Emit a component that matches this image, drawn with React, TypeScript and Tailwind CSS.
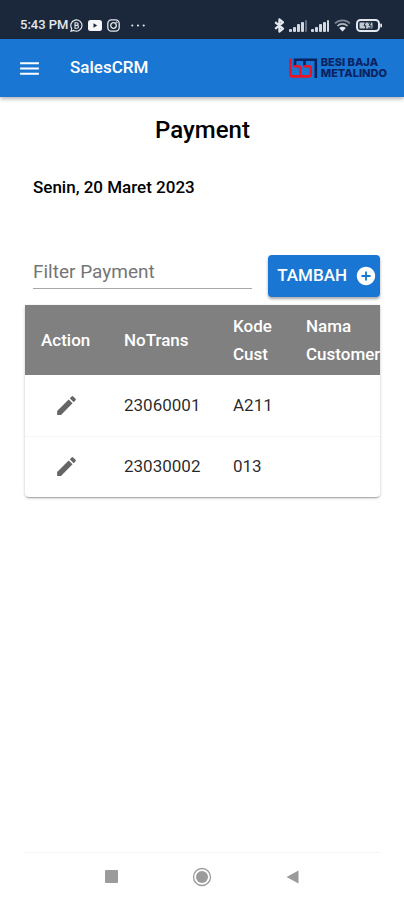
import { useMemo, useState } from 'react';
import { MdAddCircle, MdEdit, MdMenu } from 'react-icons/md';

interface Payment {
  noTrans: string;
  kodeCust: string;
  namaCustomer: string;
}

const PAYMENTS: Payment[] = [
  { noTrans: '23060001', kodeCust: 'A211', namaCustomer: '' },
  { noTrans: '23030002', kodeCust: '013', namaCustomer: '' },
];

function SignalIcon({ weak = false }: { weak?: boolean }) {
  return (
    <svg width="19" height="13" viewBox="0 0 19 13" fill="#d3d8df">
      <rect x="0" y="10" width="3" height="3" rx="1" />
      <rect x="4" y="8" width="3" height="5" rx="1" />
      <rect x="8" y="5" width="3" height="8" rx="1" />
      <rect x="12" y="3" width="3" height="10" rx="1" />
      <rect x="16" y="1" width="2" height="12" rx="1" opacity={weak ? 0.4 : 1} />
    </svg>
  );
}

function StatusBar() {
  return (
    <div className="flex h-[39px] items-end justify-between bg-[#1b283b] pr-[22px] pb-1.5 pl-5 text-[#e4e8ee]">
      <div className="flex h-4 items-center">
        <span className="w-12 text-[13px] leading-4 font-medium whitespace-nowrap">5:43 PM</span>
        <svg className="ml-0.5" width="13" height="13" viewBox="0 0 13 13" fill="none" stroke="currentColor">
          <path d="M1 12.2 1.7 9.6A5.6 5.6 0 1 1 3.8 11.5Z" strokeWidth="1.2" />
          <path d="M5 3.8v5.4h2.1a1.4 1.4 0 0 0 0-2.8H5h1.8a1.3 1.3 0 0 0 0-2.6Z" strokeWidth="1.1" />
        </svg>
        <svg className="ml-[5px]" width="14" height="11" viewBox="0 0 14 11">
          <rect width="14" height="11" rx="2.5" fill="#f4f6f8" />
          <path d="M5.5 3.3v4.4L9.2 5.5Z" fill="#1b283b" />
        </svg>
        <svg className="ml-[5px]" width="13" height="13" viewBox="0 0 13 13" fill="none" stroke="currentColor">
          <rect x="0.8" y="0.8" width="11.4" height="11.4" rx="3.6" strokeWidth="1.3" />
          <circle cx="6.5" cy="6.5" r="2.8" strokeWidth="1.3" />
          <circle cx="9.8" cy="3.2" r="0.5" />
        </svg>
        <svg className="ml-[11px]" width="14" height="3" viewBox="0 0 14 3" fill="currentColor">
          <circle cx="1.3" cy="1.5" r="1.1" />
          <circle cx="7" cy="1.5" r="1.1" />
          <circle cx="12.7" cy="1.5" r="1.1" />
        </svg>
      </div>
      <div className="flex h-4 items-center">
        <svg className="mr-1" width="11" height="15" viewBox="0 0 11 15" fill="none" stroke="currentColor">
          <path d="M1.2 4.2 9 10.6 5.4 13.6V1.4L9 4.4 1.2 10.8" strokeWidth="2.2" strokeLinejoin="round" />
        </svg>
        <SignalIcon weak />
        <span className="w-[3px]" />
        <SignalIcon />
        <svg className="ml-1" width="17" height="13" viewBox="0 0 17 13" fill="none" stroke="currentColor">
          <path d="M1 4.4a10.6 10.6 0 0 1 15 0" strokeWidth="1.7" opacity="0.5" />
          <path d="M3.4 7a7.2 7.2 0 0 1 10.2 0" strokeWidth="1.7" opacity="0.75" />
          <path d="M8.5 12.6 5.2 9.1a4.7 4.7 0 0 1 6.6 0Z" fill="currentColor" stroke="none" />
        </svg>
        <svg className="ml-[5px]" width="26" height="13" viewBox="0 0 26 13">
          <rect x="1" y="1" width="22" height="11" rx="3.5" fill="none" stroke="#e4e8ee" strokeWidth="2" />
          <rect x="3.5" y="3.5" width="13" height="6" rx="1" fill="#c3cad3" />
          <path d="M9.5 3.2 8 6.8h2l-.8 3M12 4h3l-2 2.3h2V9h-3" fill="none" stroke="#1b283b" />
          <rect x="24.3" y="4.5" width="1.7" height="4" rx="0.8" fill="#e4e8ee" />
        </svg>
      </div>
    </div>
  );
}

function CompanyLogo() {
  return (
    <div className="flex items-center gap-[3px] text-[#0b2263]">
      <svg width="29" height="20" viewBox="0 0 29 20" fill="none" strokeWidth="2.6">
        <path d="M6 8V1.8H26.8V20M15.5 8V1.8" stroke="#0b2263" />
        <path d="M1.4 0.5V16.5Q1.4 18.4 3.3 18.4H19.5Q21.8 18.4 21.8 16V10.5Q21.8 8.2 19.5 8.2H14.2" stroke="#ea1425" />
        <path d="M4.7 8.2H9Q11.4 8.2 11.4 10.5V18" stroke="#ea1425" />
      </svg>
      <span className="flex flex-col font-[Inter,sans-serif] text-[11px] leading-[11px] font-extrabold">
        <span>BESI BAJA</span>
        <span>METALINDO</span>
      </span>
    </div>
  );
}

function AppHeader() {
  return (
    <header className="z-10 flex h-[58px] items-center bg-[#1976d2] px-[17px] text-white shadow-[0_2px_4px_rgba(0,0,0,0.3)]">
      <button type="button" aria-label="Menu">
        <MdMenu size={25} />
      </button>
      <span className="ml-7 flex-1 text-[17px] font-medium">SalesCRM</span>
      <CompanyLogo />
    </header>
  );
}

function PaymentTable({ rows }: { rows: Payment[] }) {
  return (
    <div className="mt-2 overflow-hidden rounded-b bg-white shadow-[0_2px_1px_-1px_rgba(0,0,0,0.2),0_1px_3px_rgba(0,0,0,0.25)]">
      <table className="w-[420px] min-w-full table-fixed text-left text-[17px]">
        <colgroup>
          <col className="w-[83px]" />
          <col className="w-[109px]" />
          <col className="w-[73px]" />
          <col />
        </colgroup>
        <thead className="bg-[#808080] leading-7 text-white">
          <tr className="h-[70px]">
            <th className="pl-4 font-medium">Action</th>
            <th className="pl-4 font-medium">NoTrans</th>
            <th className="pl-4 font-medium">Kode Cust</th>
            <th className="pl-4 font-medium">
              Nama
              <br />
              Customer
            </th>
          </tr>
        </thead>
        <tbody className="text-black/85">
          {rows.map(row => (
            <tr key={row.noTrans} className="h-[61px] border-b border-gray-100 last:border-b-0">
              <td className="pl-[29px]">
                <button type="button" aria-label={`Edit ${row.noTrans}`} className="block text-[#666666]">
                  <MdEdit size={25} />
                </button>
              </td>
              <td className="pl-4">{row.noTrans}</td>
              <td className="pl-4">{row.kodeCust}</td>
              <td className="pl-4">{row.namaCustomer}</td>
            </tr>
          ))}
        </tbody>
      </table>
    </div>
  );
}

function NavigationBar() {
  return (
    <nav className="mx-6 flex h-12 items-center justify-around border-t border-gray-100 px-11 text-[#9b9b9b]">
      <button type="button" aria-label="Recent apps">
        <svg width="13" height="13" viewBox="0 0 13 13">
          <rect width="13" height="13" rx="1" fill="currentColor" />
        </svg>
      </button>
      <button type="button" aria-label="Home">
        <svg width="20" height="20" viewBox="0 0 20 20">
          <circle cx="10" cy="10" r="8.5" fill="none" stroke="currentColor" strokeWidth="1.3" />
          <circle cx="10" cy="10" r="6" fill="currentColor" />
        </svg>
      </button>
      <button type="button" aria-label="Back">
        <svg width="13" height="14" viewBox="0 0 13 14">
          <path d="M12.5 0.5v13L0.5 7Z" fill="currentColor" />
        </svg>
      </button>
    </nav>
  );
}

export default function App() {
  const [filter, setFilter] = useState('');

  const rows = useMemo(
    () => PAYMENTS.filter(p => p.noTrans.includes(filter) || p.kodeCust.includes(filter)),
    [filter]
  );

  return (
    <div className="flex min-h-screen flex-col bg-white font-[Roboto,sans-serif]">
      <StatusBar />
      <AppHeader />
      <main className="flex-1 pr-6 pl-[25px]">
        <h1 className="mt-[15px] text-center text-2xl leading-9 font-medium">Payment</h1>
        <p className="mt-[27px] ml-2 text-[17px] leading-6 font-medium">Senin, 20 Maret 2023</p>
        <div className="mt-14 flex items-start gap-4 pl-2">
          <input
            type="text"
            aria-label="Filter Payment"
            placeholder="Filter Payment"
            value={filter}
            onChange={e => setFilter(e.target.value)}
            className="h-[34px] min-w-0 flex-1 border-b border-[#a8a8a8] text-[19px] placeholder-[#757575] outline-none"
          />
          <button
            type="button"
            className="flex h-[42px] w-28 items-center justify-end gap-2 rounded bg-[#1976d2] pr-[3px] text-[17px] font-medium text-white shadow-[0_2px_3px_rgba(0,0,0,0.35)]"
          >
            TAMBAH
            <MdAddCircle size={22} className="shrink-0" />
          </button>
        </div>
        <PaymentTable rows={rows} />
      </main>
      <NavigationBar />
    </div>
  );
}
